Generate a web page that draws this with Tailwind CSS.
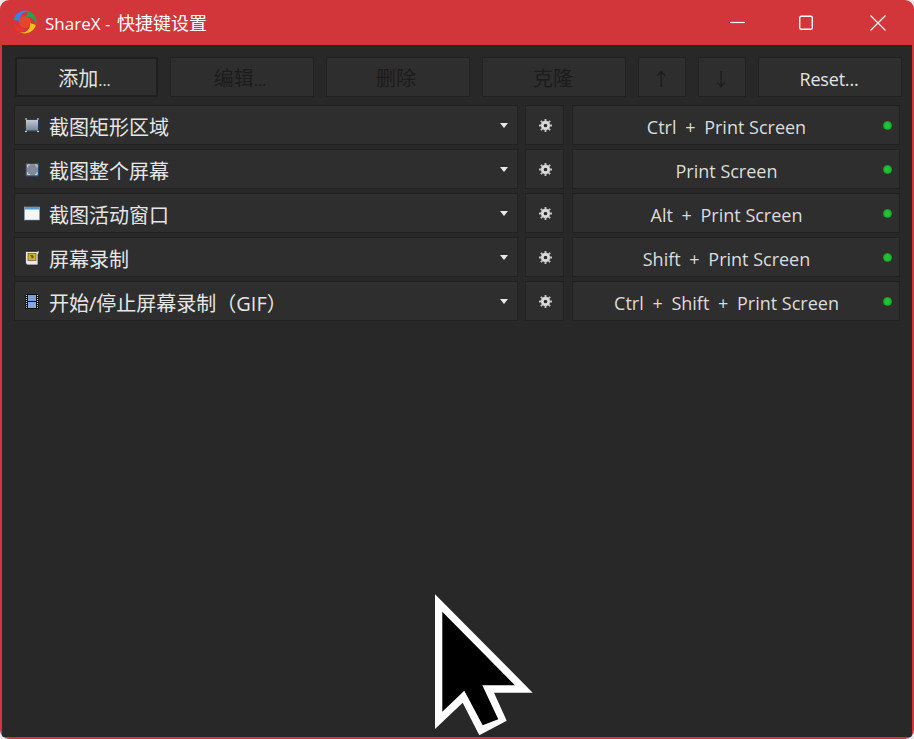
<!DOCTYPE html>
<html lang="zh-CN">
<head>
  <meta charset="UTF-8">
  <title>ShareX - 快捷键设置</title>
  <script src="https://cdn.jsdelivr.net/npm/@tailwindcss/browser@4"></script>
</head>
<body class="bg-[#e9e9e9] overflow-hidden font-['Open_Sans','Noto_Sans_CJK_SC',sans-serif]">
<div class="relative w-[914px] h-[739px] flex flex-col rounded-[9px] overflow-hidden bg-[#d2353a]">
  <!-- title bar -->
  <header class="h-[45px] shrink-0 flex items-center text-white">
    <svg class="ml-[13px] mt-[-1px] w-[24px] h-[24px]" viewBox="0 0 24 24">
      <circle cx="12" cy="12" r="6" fill="#e8452e"/>
      <path d="M9 23.500A11.500 11.500 0 0 1 .67 10 8 8 0 0 0 11 17Z" fill="#e8352e"/>
      <path d="M23 15A11.500 11.500 0 0 1 6 21.800 8 8 0 0 0 17 13Z" fill="#f6c218"/>
      <path d="M15 .9A11.500 11.500 0 0 1 22 17.700 8 8 0 0 0 13 7Z" fill="#2f9e44"/>
      <path d="M.67 10A11.500 11.500 0 0 1 19.390 3.190 8 8 0 0 0 7 11Z" fill="#2f86e6"/>
    </svg>
    <h1 class="ml-[8px] text-[18px] leading-none"><span class="text-[17px] mr-[2px]">ShareX -</span> 快捷键设置</h1>
    <div class="ml-auto flex items-center">
      <svg class="w-[16px] h-[16px] mr-[52px]" viewBox="0 0 16 16" stroke="#fff" stroke-width="1.2"><path d="M0 7.500h15"/></svg>
      <svg class="w-[16px] h-[16px] mr-[56px]" viewBox="0 0 16 16" fill="none" stroke="#fff" stroke-width="1.4"><rect x="1.700" y="1.200" width="12.600" height="13.100" rx="1.500"/></svg>
      <svg class="w-[16px] h-[16px] mr-[28px]" viewBox="0 0 16 16" stroke="#fff" stroke-width="1.2"><path d="M.5.5l15 15M15.500.5l-15 15"/></svg>
    </div>
  </header>

  <!-- client area -->
  <main class="flex-1 mx-[2px] mb-[2px] bg-[#282828] pt-[12px] pl-[13px] text-[#e3e3e3]">
    <div class="flex gap-[12px] text-[20px]">
      <button class="w-[143px] h-[40px] pt-[4px] pr-[4px] bg-[#2e2e2e] border-2 border-[#1f1f1f]">添加<span class="text-[16px]">...</span></button>
      <button class="w-[144px] h-[40px] pt-[4px] pr-[4px] bg-[#2e2e2e] border border-[#222] text-[#1c1c1c]">编辑<span class="text-[16px]">...</span></button>
      <button class="w-[144px] h-[40px] pt-[4px] pr-[4px] bg-[#2e2e2e] border border-[#222] text-[#1c1c1c]">删除</button>
      <button class="w-[144px] h-[40px] pt-[4px] pr-[2px] bg-[#2e2e2e] border border-[#222] text-[#1c1c1c]">克隆</button>
      <button class="w-[48px] h-[40px] pt-[4px] pr-[2px] bg-[#2e2e2e] border border-[#222] text-[#1c1c1c] text-[18px]">↑</button>
      <button class="w-[48px] h-[40px] pt-[4px] pr-[2px] bg-[#2e2e2e] border border-[#222] text-[#1c1c1c] text-[18px]">↓</button>
      <button class="w-[144px] h-[40px] pt-[4px] pr-[2px] bg-[#2e2e2e] border border-[#222] text-[18px] tracking-[-0.2px]">Reset...</button>
    </div>

    <div class="mt-[8px] ml-[-1px] flex flex-col gap-[4px]">
      <!-- row 1 -->
      <div class="flex gap-[7px]">
        <div class="w-[504px] h-[40px] bg-[#2e2e2e] border border-[#222] flex items-center pl-[9px] pr-[9px]">
          <svg class="mt-[2px] w-[16px] h-[16px] shrink-0" viewBox="0 0 16 16"><defs><linearGradient id="g1" x1="0" y1="0" x2="0" y2="1"><stop offset="0" stop-color="#c3ccd6"/><stop offset="1" stop-color="#76838f"/></linearGradient></defs><rect x="1.500" y="1.500" width="13" height="11.500" fill="url(#g1)" stroke="#27405e"/><path d="M1 1h2M1 13.500h2M13 1h2M13 13.500h2" stroke="#dbe8f5"/></svg>
          <span class="ml-[9px] mt-[5px] text-[20px] text-[#e6e6e6]">截图矩形区域</span>
          <svg class="ml-auto w-[8px] h-[5px]" viewBox="0 0 8 5"><path d="M0 0h8L4 5Z" fill="#e8e8e8"/></svg>
        </div>
        <div class="w-[39px] h-[40px] pl-[1px] bg-[#2e2e2e] border border-[#222] flex items-center justify-center">
          <svg class="w-[13px] h-[13px]" viewBox="0 0 14 14"><circle cx="7" cy="7" r="3.500" fill="none" stroke="#dcdcdc" stroke-width="3"/><path d="M7 0v3M7 11v3M0 7h3M11 7h3M2 2l2 2M10 10l2 2M12 2l-2 2M4 10l-2 2" stroke="#c8c8c8" stroke-width="2"/></svg>
        </div>
        <div class="relative ml-[1px] w-[328px] h-[40px] pt-[4px] pr-[19px] bg-[#2e2e2e] border border-[#222] flex items-center justify-center text-[18px] text-[#dcdcdc]">
          <span>Ctrl <span class="mx-[4px]">+</span> Print Screen</span>
          <span class="absolute right-[7px] top-[15px] w-[9px] h-[9px] rounded-full bg-[#20c030] border border-[#149a28]"></span>
        </div>
      </div>
      <!-- row 2 -->
      <div class="flex gap-[7px]">
        <div class="w-[504px] h-[40px] bg-[#2e2e2e] border border-[#222] flex items-center pl-[9px] pr-[9px]">
          <svg class="mt-[2px] w-[16px] h-[16px] shrink-0" viewBox="0 0 16 16"><rect x="2" y="1.500" width="12.500" height="12.500" fill="#7f8a95" stroke="#2c4a6e"/><path d="M3.500 5.500V3h2.500M11 3h2v2.500M13 10v2.500h-2M6 12.500H3.500V10" fill="none" stroke="#c8d4e0"/></svg>
          <span class="ml-[9px] mt-[5px] text-[20px] text-[#e6e6e6]">截图整个屏幕</span>
          <svg class="ml-auto w-[8px] h-[5px]" viewBox="0 0 8 5"><path d="M0 0h8L4 5Z" fill="#e8e8e8"/></svg>
        </div>
        <div class="w-[39px] h-[40px] pl-[1px] bg-[#2e2e2e] border border-[#222] flex items-center justify-center">
          <svg class="w-[13px] h-[13px]" viewBox="0 0 14 14"><circle cx="7" cy="7" r="3.500" fill="none" stroke="#dcdcdc" stroke-width="3"/><path d="M7 0v3M7 11v3M0 7h3M11 7h3M2 2l2 2M10 10l2 2M12 2l-2 2M4 10l-2 2" stroke="#c8c8c8" stroke-width="2"/></svg>
        </div>
        <div class="relative ml-[1px] w-[328px] h-[40px] pt-[4px] pr-[19px] bg-[#2e2e2e] border border-[#222] flex items-center justify-center text-[18px] text-[#dcdcdc]">
          <span>Print Screen</span>
          <span class="absolute right-[7px] top-[15px] w-[9px] h-[9px] rounded-full bg-[#20c030] border border-[#149a28]"></span>
        </div>
      </div>
      <!-- row 3 -->
      <div class="flex gap-[7px]">
        <div class="w-[504px] h-[40px] bg-[#2e2e2e] border border-[#222] flex items-center pl-[9px] pr-[9px]">
          <svg class="mt-[2px] w-[16px] h-[16px] shrink-0" viewBox="0 0 16 16"><rect x=".5" y="1" width="15" height="13" fill="#f4f6f8" stroke="#8a9fb5" stroke-width=".6"/><rect x="1" y="1" width="14" height="2.500" fill="#4d9be0"/></svg>
          <span class="ml-[9px] mt-[5px] text-[20px] text-[#e6e6e6]">截图活动窗口</span>
          <svg class="ml-auto w-[8px] h-[5px]" viewBox="0 0 8 5"><path d="M0 0h8L4 5Z" fill="#e8e8e8"/></svg>
        </div>
        <div class="w-[39px] h-[40px] pl-[1px] bg-[#2e2e2e] border border-[#222] flex items-center justify-center">
          <svg class="w-[13px] h-[13px]" viewBox="0 0 14 14"><circle cx="7" cy="7" r="3.500" fill="none" stroke="#dcdcdc" stroke-width="3"/><path d="M7 0v3M7 11v3M0 7h3M11 7h3M2 2l2 2M10 10l2 2M12 2l-2 2M4 10l-2 2" stroke="#c8c8c8" stroke-width="2"/></svg>
        </div>
        <div class="relative ml-[1px] w-[328px] h-[40px] pt-[4px] pr-[19px] bg-[#2e2e2e] border border-[#222] flex items-center justify-center text-[18px] text-[#dcdcdc]">
          <span>Alt <span class="mx-[4px]">+</span> Print Screen</span>
          <span class="absolute right-[7px] top-[15px] w-[9px] h-[9px] rounded-full bg-[#20c030] border border-[#149a28]"></span>
        </div>
      </div>
      <!-- row 4 -->
      <div class="flex gap-[7px]">
        <div class="w-[504px] h-[40px] bg-[#2e2e2e] border border-[#222] flex items-center pl-[9px] pr-[9px]">
          <svg class="mt-[2px] w-[16px] h-[16px] shrink-0" viewBox="0 0 16 16"><path d="M1.500 1.500h11.500l2-1v3l-1 .5V15H3l-1.500-2Z" fill="#e9e9e4" stroke="#222" stroke-width=".7"/><rect x="4" y="3.500" width="8" height="7" fill="#d8b320" stroke="#555" stroke-width=".7"/><path d="M6 5h3l1 2.500-2 1Z" fill="#6b5a10"/></svg>
          <span class="ml-[9px] mt-[5px] text-[20px] text-[#e6e6e6]">屏幕录制</span>
          <svg class="ml-auto w-[8px] h-[5px]" viewBox="0 0 8 5"><path d="M0 0h8L4 5Z" fill="#e8e8e8"/></svg>
        </div>
        <div class="w-[39px] h-[40px] pl-[1px] bg-[#2e2e2e] border border-[#222] flex items-center justify-center">
          <svg class="w-[13px] h-[13px]" viewBox="0 0 14 14"><circle cx="7" cy="7" r="3.500" fill="none" stroke="#dcdcdc" stroke-width="3"/><path d="M7 0v3M7 11v3M0 7h3M11 7h3M2 2l2 2M10 10l2 2M12 2l-2 2M4 10l-2 2" stroke="#c8c8c8" stroke-width="2"/></svg>
        </div>
        <div class="relative ml-[1px] w-[328px] h-[40px] pt-[4px] pr-[19px] bg-[#2e2e2e] border border-[#222] flex items-center justify-center text-[18px] text-[#dcdcdc]">
          <span>Shift <span class="mx-[4px]">+</span> Print Screen</span>
          <span class="absolute right-[7px] top-[15px] w-[9px] h-[9px] rounded-full bg-[#20c030] border border-[#149a28]"></span>
        </div>
      </div>
      <!-- row 5 -->
      <div class="flex gap-[7px]">
        <div class="w-[504px] h-[40px] bg-[#2e2e2e] border border-[#222] flex items-center pl-[9px] pr-[9px]">
          <svg class="mt-[2px] w-[16px] h-[16px] shrink-0" viewBox="0 0 16 16"><rect x="1.500" y="0" width="13" height="15" fill="#0d0d0d"/><rect x="4" y="1" width="8" height="6" fill="#7f9fd8"/><rect x="4" y="8" width="8" height="6" fill="#8aa6e0"/><path d="M2.500 1v13M13.500 1v13" stroke="#ddd" stroke-width="1" stroke-dasharray="1 1"/></svg>
          <span class="ml-[9px] mt-[5px] text-[20px] text-[#e6e6e6]">开始/停止屏幕录制（GIF）</span>
          <svg class="ml-auto w-[8px] h-[5px]" viewBox="0 0 8 5"><path d="M0 0h8L4 5Z" fill="#e8e8e8"/></svg>
        </div>
        <div class="w-[39px] h-[40px] pl-[1px] bg-[#2e2e2e] border border-[#222] flex items-center justify-center">
          <svg class="w-[13px] h-[13px]" viewBox="0 0 14 14"><circle cx="7" cy="7" r="3.500" fill="none" stroke="#dcdcdc" stroke-width="3"/><path d="M7 0v3M7 11v3M0 7h3M11 7h3M2 2l2 2M10 10l2 2M12 2l-2 2M4 10l-2 2" stroke="#c8c8c8" stroke-width="2"/></svg>
        </div>
        <div class="relative ml-[1px] w-[328px] h-[40px] pt-[4px] pr-[19px] bg-[#2e2e2e] border border-[#222] flex items-center justify-center text-[18px] text-[#dcdcdc]">
          <span>Ctrl <span class="mx-[4px]">+</span> Shift <span class="mx-[4px]">+</span> Print Screen</span>
          <span class="absolute right-[7px] top-[15px] w-[9px] h-[9px] rounded-full bg-[#20c030] border border-[#149a28]"></span>
        </div>
      </div>
    </div>
  </main>

  <!-- mouse cursor over the window -->
  <svg class="absolute left-0 top-0 w-[914px] h-[739px] pointer-events-none" viewBox="0 0 914 739">
    <path d="M435 594.300 532.700 692.700H494L506.700 720.700 479.300 735.300 462.700 702.700 435 729Z" fill="#fff"/>
    <path d="M442.300 611.700 515 685.300H482.300L498.300 719.300 482.700 725.300 464.300 690.700 442.300 711.700Z" fill="#000"/>
  </svg>
</div>
</body>
</html>
